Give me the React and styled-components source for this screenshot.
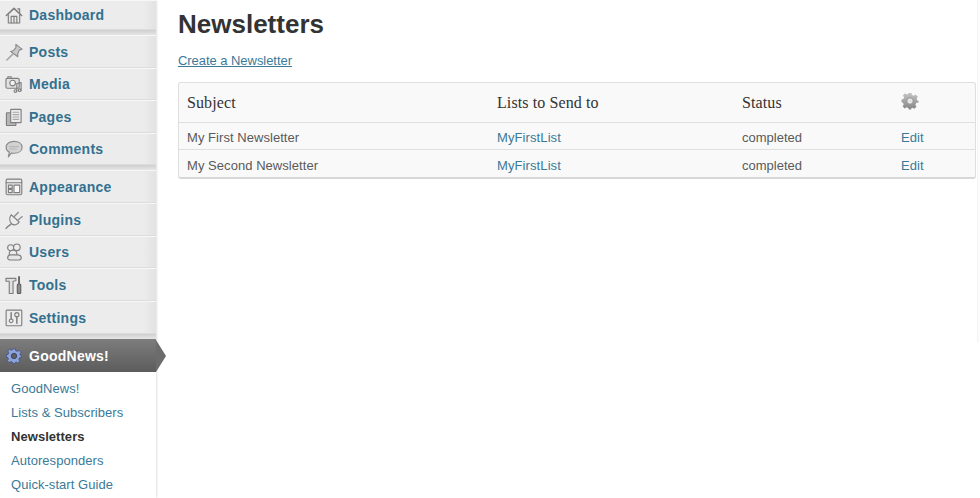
import React from "react";
import styled, { createGlobalStyle } from "styled-components";

const GlobalStyle = createGlobalStyle`
  html, body {
    margin: 0;
    padding: 0;
    background: #fff;
  }
  body {
    font-family: "Liberation Sans", Arial, sans-serif;
    overflow: hidden;
  }
`;

const stroke = { fill: "none", stroke: "#7f7f7f", strokeWidth: 1.2, strokeLinejoin: "round", strokeLinecap: "round" };

const icons = {
  dashboard: (
    <g {...stroke}>
      <path d="M1.5 10 L9.5 2.5 L17.5 10" strokeWidth="1.7" />
      <path d="M3.5 9 V18 H15.5 V9" fill="#e8e8e8" />
      <path d="M6.5 18 V11 H12.5 V18 M9.5 11 V18" />
      <path d="M13.5 3 H15.5 V7" fill="#c4c4c4" />
    </g>
  ),
  posts: (
    <g {...stroke}>
      <path d="M11.5 1.5 L18 6.5 L15 7.5 L13.5 11.5 L13.5 14.5 L6 9 L9 8 L11.5 5 Z" fill="#cacaca" stroke="#8c8c8c" />
      <path d="M8 12 L2 18" stroke="#a5a5a5" strokeWidth="1.6" />
    </g>
  ),
  media: (
    <g {...stroke}>
      <rect x="1" y="3.5" width="14" height="10.5" rx="1.5" fill="#e2e2e2" />
      <path d="M3 3.5 V1.8 H6.5 V3.5" />
      <circle cx="8" cy="8.5" r="3" fill="#f2f2f2" />
      <path d="M12.5 17 V9 M17 16 V8 L12.5 9" />
      <circle cx="11" cy="17" r="1.4" />
      <circle cx="15.5" cy="16" r="1.4" />
    </g>
  ),
  pages: (
    <g {...stroke}>
      <rect x="1.5" y="5" width="10" height="13.5" rx="0.5" fill="#b5b5b5" />
      <rect x="6" y="1.5" width="11" height="14" rx="0.5" fill="#ececec" />
      <path d="M8.5 4.5 H14.5 M8.5 7 H14.5 M8.5 9.5 H14.5 M8.5 12 H14.5" stroke="#a8a8a8" />
    </g>
  ),
  comments: (
    <g {...stroke}>
      <path d="M9.5 1.5 C14.5 1.5 18 4 18 7.8 C18 11.5 14.5 14 9.5 14 C8.6 14 7.8 13.9 7 13.7 L3.5 17.8 L4.6 12.8 C2.5 11.8 1.2 10 1.2 7.8 C1.2 4 4.5 1.5 9.5 1.5 Z" fill="#d2d2d2" stroke="#8b8b8b" />
      <path d="M5 7 H14 M5 9.5 H12" stroke="#b6b6b6" />
    </g>
  ),
  appearance: (
    <g {...stroke}>
      <rect x="1.2" y="1.2" width="16.5" height="16.5" rx="1.5" fill="#e9e9e9" />
      <path d="M1.2 5 H17.7" />
      <rect x="3.6" y="7.5" width="4" height="3.5" />
      <rect x="3.6" y="12" width="4" height="3.5" />
      <rect x="9.5" y="7.5" width="6" height="8" fill="#fafafa" />
    </g>
  ),
  plugins: (
    <g {...stroke}>
      <path d="M6.5 4 L15 11.5 C13 15 9.5 15.5 7 13.5 C4.5 11 4.5 7 6.5 4 Z" fill="#ececec" />
      <path d="M9.5 6 L14 1.5 M13 10 L18 6" strokeWidth="1.5" stroke="#8f8f8f" />
      <path d="M6.5 13.5 C5 15.5 3 15.5 1 18.5" strokeWidth="1.4" />
    </g>
  ),
  users: (
    <g {...stroke}>
      <circle cx="6" cy="5" r="3.2" fill="#ececec" />
      <circle cx="12.5" cy="4.5" r="3.5" fill="#ececec" />
      <ellipse cx="8.5" cy="11" rx="4" ry="3.4" fill="#ececec" />
      <path d="M5 18 C1.5 17 2.5 12.5 6 12.5 H13.5 C17.5 12.5 18.5 17 15 18 Z" fill="#e6e6e6" />
    </g>
  ),
  tools: (
    <g {...stroke}>
      <path d="M1 2.5 H11.5 V5 L8.5 5.5 V18.5 H4.5 V5.5 L1 5.5 Z" fill="#e0e0e0" />
      <path d="M14.8 1 V8" strokeWidth="2" stroke="#666" />
      <rect x="13" y="8.5" width="3.6" height="10" rx="1" fill="#8f8f8f" stroke="#5f5f5f" />
    </g>
  ),
  settings: (
    <g {...stroke}>
      <rect x="1.2" y="1.2" width="16.5" height="16.5" rx="0.8" fill="#ececec" />
      <circle cx="6.5" cy="12.5" r="2" />
      <path d="M6.5 4 V10.5" strokeWidth="1.6" />
      <circle cx="12.5" cy="6" r="2.2" />
      <path d="M12.5 8 V15" strokeWidth="1.6" />
    </g>
  ),
};

const gearPath =
  "M8.3 1 H11.7 L12.2 3.4 L14.2 4.2 L16.3 2.9 L18.7 5.3 L17.4 7.4 L18.2 9.4 L19.5 10 V11.7 L16.8 12.3 L16 14.2 L17.2 16.4 L14.8 18.7 L12.7 17.4 L11.7 17.9 L11.2 19.5 H8.8 L8.2 17.8 L6.2 17 L4 18.2 L1.8 15.9 L3 13.8 L2.2 11.9 L0.5 11.4 V8.4 L2.6 7.9 L3.4 5.9 L2.2 3.8 L4.5 1.5 L6.6 2.8 L7.8 2.3 Z";

const menuGroups = [
  [{ key: "dashboard", label: "Dashboard", height: 30 }],
  [
    { key: "posts", label: "Posts", height: 33 },
    { key: "media", label: "Media", height: 32 },
    { key: "pages", label: "Pages", height: 33 },
    { key: "comments", label: "Comments", height: 32 },
  ],
  [
    { key: "appearance", label: "Appearance", height: 33 },
    { key: "plugins", label: "Plugins", height: 33 },
    { key: "users", label: "Users", height: 32 },
    { key: "tools", label: "Tools", height: 33 },
    { key: "settings", label: "Settings", height: 33 },
  ],
];

const subItems = ["GoodNews!", "Lists & Subscribers", "Newsletters", "Autoresponders", "Quick-start Guide"];

const newsletters = [
  { subject: "My First Newsletter", list: "MyFirstList", status: "completed" },
  { subject: "My Second Newsletter", list: "MyFirstList", status: "completed" },
];

export default function App() {
  return (
    <Page>
      <GlobalStyle />
      <Sidebar>
        {menuGroups.map((group, i) => (
          <React.Fragment key={i}>
            {group.map((item) => (
              <MenuItem key={item.key} $height={item.height}>
                <MenuIcon viewBox="0 0 19 19">{icons[item.key]}</MenuIcon>
                {item.label}
              </MenuItem>
            ))}
            <Separator />
          </React.Fragment>
        ))}
        <ActiveItem>
          <ActiveIcon viewBox="0 0 20 20">
            <path d={gearPath} fill="#8fa3d8" stroke="#3f4f86" strokeWidth="1" />
            <circle cx="10" cy="10" r="3.4" fill="#5d5d5d" stroke="#2f3d70" />
          </ActiveIcon>
          GoodNews!
        </ActiveItem>
        <SubMenu>
          {subItems.map((label) => (
            <SubItem key={label} $current={label === "Newsletters"}>
              {label}
            </SubItem>
          ))}
        </SubMenu>
      </Sidebar>
      <Main>
        <Title>Newsletters</Title>
        <CreateLink>Create a Newsletter</CreateLink>
        <Table>
          <HeadRow>
            <HeadCell>Subject</HeadCell>
            <HeadCell>Lists to Send to</HeadCell>
            <HeadCell>Status</HeadCell>
            <HeadCell>
              <HeadGear viewBox="0 0 20 20">
                <defs>
                  <linearGradient id="gearFill" x1="0" y1="0" x2="0" y2="1">
                    <stop offset="0" stopColor="#c4c4c4" />
                    <stop offset="1" stopColor="#848484" />
                  </linearGradient>
                </defs>
                <path d={gearPath} fill="url(#gearFill)" />
                <circle cx="10" cy="10" r="3.6" fill="#e4e4e4" stroke="#8d8d8d" />
              </HeadGear>
            </HeadCell>
          </HeadRow>
          {newsletters.map((row) => (
            <Row key={row.subject}>
              <SubjectCell>{row.subject}</SubjectCell>
              <LinkCell>{row.list}</LinkCell>
              <Cell>{row.status}</Cell>
              <LinkCell>Edit</LinkCell>
            </Row>
          ))}
        </Table>
      </Main>
      <EdgeStrip />
    </Page>
  );
}

const Page = styled.div`
  display: flex;
  width: 980px;
  height: 498px;
  overflow: hidden;
`;

const Sidebar = styled.nav`
  display: flex;
  flex-direction: column;
  flex: none;
  width: 156px;
  height: 498px;
  background: #ececec;
  box-shadow: 1px 0 2px rgba(0, 0, 0, 0.12);
`;

const MenuItem = styled.div`
  display: flex;
  align-items: center;
  flex: none;
  box-sizing: border-box;
  height: ${(p) => p.$height}px;
  padding-left: 5px;
  gap: 6px;
  font-size: 14px;
  font-weight: bold;
  letter-spacing: 0.25px;
  color: #33708f;
  background: linear-gradient(to right, #ececec 92%, #e2e2e2);
  border-bottom: 1px solid #dcdcdc;
  border-top: 1px solid #f7f7f7;
`;

const MenuIcon = styled.svg`
  width: 18px;
  height: 18px;
  flex: none;
`;

const Separator = styled.div`
  flex: none;
  height: 5px;
  background: linear-gradient(#cfcfcf, #e6e6e6);
`;

const ActiveItem = styled.div`
  position: relative;
  display: flex;
  align-items: center;
  flex: none;
  height: 33px;
  padding-left: 6px;
  gap: 7px;
  font-size: 14px;
  font-weight: bold;
  letter-spacing: 0.25px;
  color: #fff;
  background: linear-gradient(#7d7d7d, #5c5c5c);

  &::after {
    content: "";
    position: absolute;
    left: 156px;
    top: 1px;
    border-left: 10px solid #6c6c6c;
    border-top: 16px solid transparent;
    border-bottom: 16px solid transparent;
  }
`;

const ActiveIcon = styled.svg`
  width: 16px;
  height: 16px;
  flex: none;
`;

const SubMenu = styled.div`
  display: flex;
  flex-direction: column;
  flex: 1;
  padding: 5px 0 0 11px;
  background: #fff;
`;

const SubItem = styled.div`
  height: 24px;
  line-height: 24px;
  font-size: 13px;
  letter-spacing: 0.05px;
  color: ${(p) => (p.$current ? "#333" : "#3a7a98")};
  font-weight: ${(p) => (p.$current ? "bold" : "normal")};
`;

const Main = styled.main`
  display: flex;
  flex-direction: column;
  flex: 1;
  padding: 0 1px 0 22px;
`;

const EdgeStrip = styled.div`
  flex: none;
  width: 3px;
  height: 342px;
  background: #fbfbfb;
  border-left: 1px solid #f4f4f4;
  box-sizing: border-box;
`;

const Title = styled.h1`
  margin: 10px 0 0;
  font-size: 26px;
  line-height: 28px;
  font-weight: bold;
  color: #333;
`;

const CreateLink = styled.a`
  margin-top: 14px;
  font-size: 13px;
  line-height: 17px;
  color: #3a7a98;
  text-decoration: underline;
  letter-spacing: -0.05px;
`;

const Table = styled.div`
  margin-top: 13px;
  border: 1px solid #dfdfdf;
  border-bottom: 2px solid #d8d8d8;
  border-radius: 3px;
  background: #f9f9f9;
`;

const columns = "grid-template-columns: 310px 245px 159px 1fr;";

const HeadRow = styled.div`
  display: grid;
  ${columns}
  align-items: center;
  box-sizing: border-box;
  height: 40px;
  padding-left: 8px;
  border-bottom: 1px solid #dfdfdf;
`;

const HeadCell = styled.div`
  font-family: "Liberation Serif", Georgia, serif;
  font-size: 16px;
  letter-spacing: 0.1px;
  color: #333;
`;

const HeadGear = styled.svg`
  display: block;
  width: 18px;
  height: 18px;
  margin-bottom: 4px;
`;

const Row = styled.div`
  display: grid;
  ${columns}
  align-items: center;
  height: 27px;
  padding: 3px 0 0 8px;
  box-sizing: border-box;
  border-bottom: 1px solid #dfdfdf;

  &:last-child {
    border-bottom: none;
  }
`;

const Cell = styled.div`
  font-size: 13px;
  color: #5a5a5a;
`;

const SubjectCell = styled(Cell)`
  letter-spacing: 0.05px;
`;

const LinkCell = styled(Cell)`
  color: #3a7a98;
  letter-spacing: 0.1px;
`;
